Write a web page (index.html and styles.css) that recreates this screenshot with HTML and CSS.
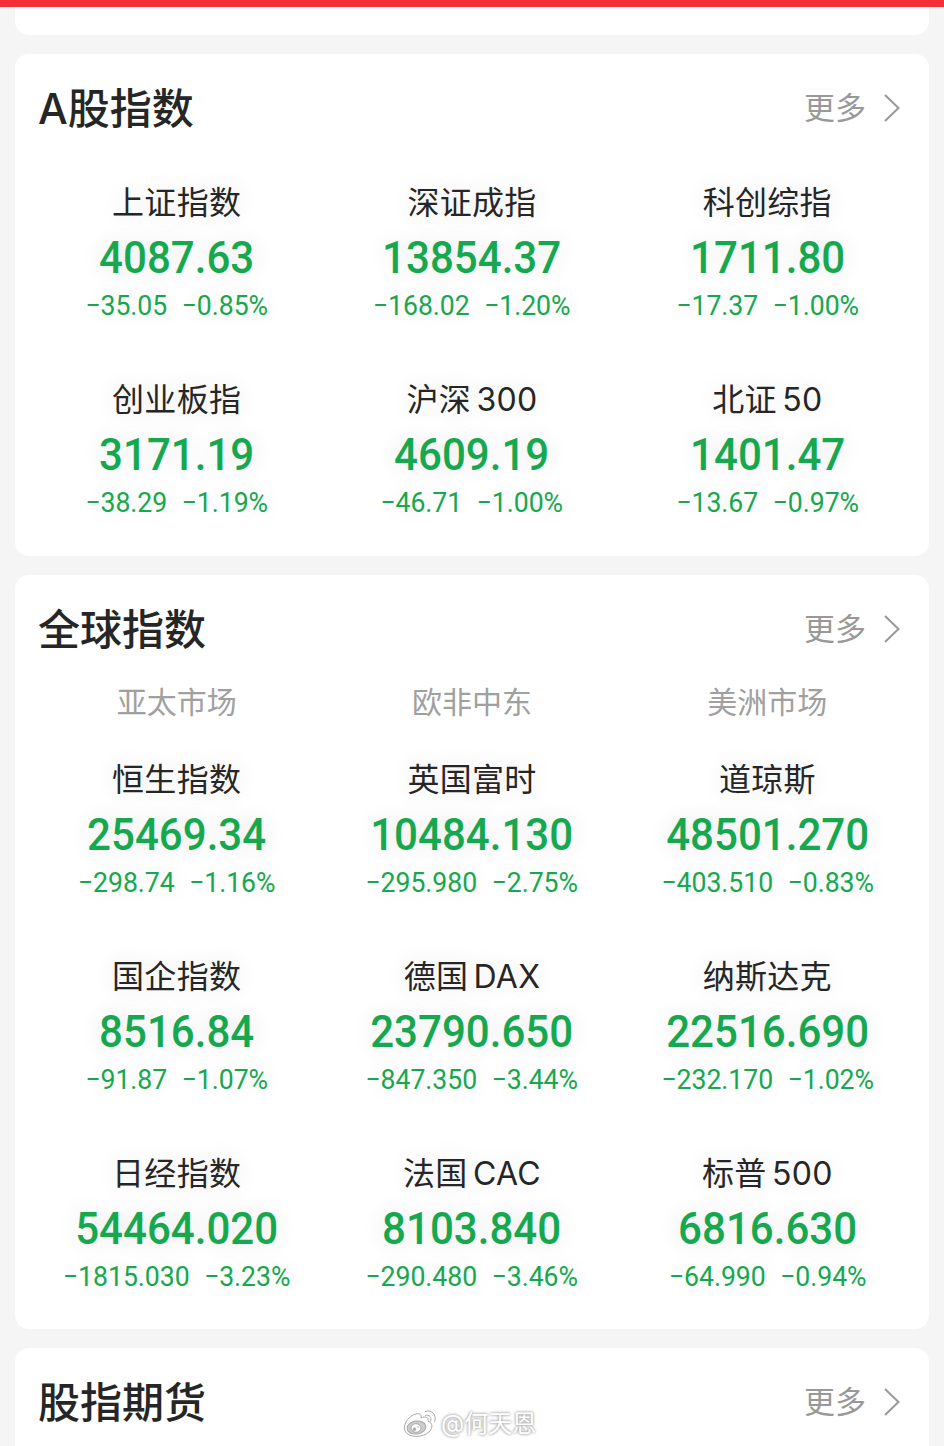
FILE: index.html
```
<!DOCTYPE html>
<html lang="zh-CN">
<head>
  <meta charset="UTF-8" />
  <title>指数行情</title>
  <link rel="stylesheet" href="styles.css">
</head>
<body>
  <div class="top-bar"></div>

  <div class="card card-prev"></div>

  <section class="card">
    <div class="card-header">
      <h2>A股指数</h2>
      <a class="more"><span>更多</span> <svg width="18" height="30" viewBox="0 0 18 30"><path d="M2 2 L15.5 15 L2 28" /></svg></a>
    </div>
    <div class="grid" id="cnGrid"></div>
  </section>

  <section class="card card-global">
    <div class="card-header">
      <h2>全球指数</h2>
      <a class="more"><span>更多</span> <svg width="18" height="30" viewBox="0 0 18 30"><path d="M2 2 L15.5 15 L2 28" /></svg></a>
    </div>
    <div class="grid markets">
      <span>亚太市场</span>
      <span>欧非中东</span>
      <span>美洲市场</span>
    </div>
    <div class="grid" id="globalGrid"></div>
  </section>

  <section class="card card-last">
    <div class="card-header">
      <h2>股指期货</h2>
      <a class="more"><span>更多</span> <svg width="18" height="30" viewBox="0 0 18 30"><path d="M2 2 L15.5 15 L2 28" /></svg></a>
    </div>
  </section>

  <div class="watermark">
    <svg width="34" height="30" viewBox="0 0 34 30">
      <path d="M2 22 C-1 15 7 6 13 5 C17 4 19 6 18 9 C22 7 26 8 25 12 C30 14 30 19 26 23 C20 29 5 29 2 22 Z" />
      <ellipse class="eye" cx="13.5" cy="18.5" rx="9.5" ry="6.5" transform="rotate(-8 13.5 18.5)" />
      <ellipse cx="13" cy="19" rx="5" ry="4.3" />
      <circle class="dot" cx="11.5" cy="20.3" r="1.7" />
      <circle class="dot" cx="15" cy="18" r=".8" />
      <path class="wave" d="M22 2.5 C29 0 34 6 31.5 13" />
      <path class="wave" d="M22 6.5 C26.5 5 29 8.5 27.5 12.5" />
    </svg>
    <span>@何天恩</span>
  </div>

<script>
  const cnIndexes = [
    ['上证指数', '4087.63', '−35.05', '−0.85%'],
    ['深证成指', '13854.37', '−168.02', '−1.20%'],
    ['科创综指', '1711.80', '−17.37', '−1.00%'],
    ['创业板指', '3171.19', '−38.29', '−1.19%'],
    ['沪深 300', '4609.19', '−46.71', '−1.00%'],
    ['北证 50', '1401.47', '−13.67', '−0.97%']
  ];

  const globalIndexes = [
    ['恒生指数', '25469.34', '−298.74', '−1.16%'],
    ['英国富时', '10484.130', '−295.980', '−2.75%'],
    ['道琼斯', '48501.270', '−403.510', '−0.83%'],
    ['国企指数', '8516.84', '−91.87', '−1.07%'],
    ['德国 DAX', '23790.650', '−847.350', '−3.44%'],
    ['纳斯达克', '22516.690', '−232.170', '−1.02%'],
    ['日经指数', '54464.020', '−1815.030', '−3.23%'],
    ['法国 CAC', '8103.840', '−290.480', '−3.46%'],
    ['标普 500', '6816.630', '−64.990', '−0.94%']
  ];

  function addLine(parent, className, text) {
    const el = document.createElement('div');
    el.className = className;
    el.textContent = text;
    parent.appendChild(el);
    return el;
  }

  function renderGrid(id, rows) {
    const grid = document.getElementById(id);
    rows.forEach(([name, value, diff, percent]) => {
      const cell = addLine(grid, 'cell', '');
      addLine(cell, 'name', name);
      addLine(cell, 'value', value);
      const change = addLine(cell, 'change', '');
      addLine(change, 'diff', diff);
      addLine(change, 'percent', percent);
    });
  }

  renderGrid('cnGrid', cnIndexes);
  renderGrid('globalGrid', globalIndexes);
</script>
</body>
</html>
```
FILE: styles.css
```
* {
  box-sizing: border-box;
}
body {
  margin: 0;
  height: 1446px;
  overflow: hidden;
  background: #f5f5f5;
  color: #262626;
  font-family: Inter, "Noto Sans CJK SC", sans-serif;
}
.top-bar {
  height: 7px;
  background: #f23036;
}
.card {
  margin: 0 15px 19px;
  padding: 0 14px;
  background: white;
  border-radius: 14px;
}
.card-prev {
  height: 28px;
  border-radius: 0 0 14px 14px;
}
.card-global {
  height: 754px;
}
.card-last {
  height: 120px;
  margin-bottom: 0;
}
.card-header {
  display: flex;
  justify-content: space-between;
  align-items: center;
  height: 108px;
  padding: 0 14px 0 9px;
}
h2 {
  margin: 0;
  padding-top: 2px;
  font-size: 42px;
  font-weight: 500;
  line-height: 60px;
}
.more {
  display: flex;
  align-items: center;
  gap: 17px;
  color: #999;
  font-family: "Noto Sans CJK SC", sans-serif;
  font-size: 31px;
  line-height: 44px;
}
.more span {
  padding-bottom: 4px;
}
.more svg {
  fill: none;
  stroke: #999;
  stroke-width: 2;
}
.grid {
  display: grid;
  grid-template-columns: repeat(3, 1fr);
  text-align: center;
}
.markets {
  height: 56px;
  color: #a0a0a0;
  font-size: 30px;
  line-height: 38px;
}
.cell {
  height: 197px;
  padding-top: 21px;
  color: #16a84f;
  text-shadow: 0 0 24px rgba(0, 0, 0, 0.12);
}
.name {
  color: #262626;
  font-size: 32px;
  letter-spacing: 0.3px;
  word-spacing: -4px;
  line-height: 40px;
}
/* narrower digits */
.value {
  font-family: Roboto, sans-serif;
  font-size: 45px;
  font-weight: 500;
  line-height: 70px;
  transform: scaleX(0.935);
}
.change {
  display: flex;
  justify-content: center;
  gap: 15px;
  padding-top: 1px;
  font-family: Roboto, sans-serif;
  font-size: 28px;
  line-height: 24px;
  transform: scaleX(0.95);
}
.watermark {
  position: absolute;
  left: 403px;
  top: 1407px;
  display: flex;
  align-items: center;
  gap: 4px;
  color: white;
  font-size: 24px;
  line-height: 34px;
  text-shadow: 0 0 3px #999, 0 0 3px #bbb;
}
.watermark svg {
  fill: white;
  stroke: #aaa;
  stroke-width: 1;
}
.watermark .eye {
  fill: #ccc;
}
.watermark .dot {
  fill: #aaa;
  stroke: none;
}
.watermark .wave {
  fill: none;
}
```
